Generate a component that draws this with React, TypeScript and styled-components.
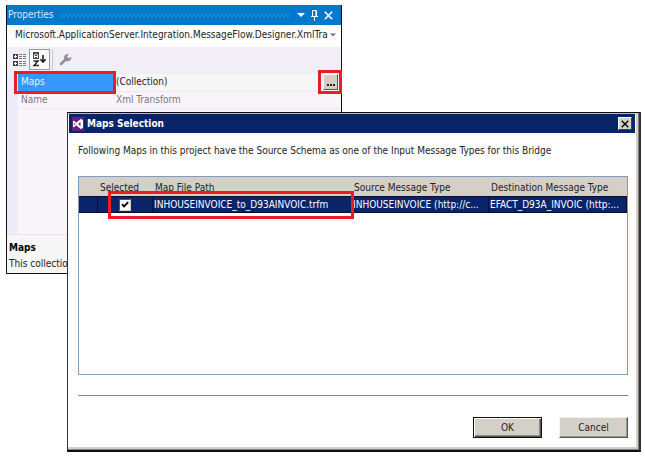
import React from 'react';
import styled, { createGlobalStyle } from 'styled-components';

const FONT = '"DejaVu Sans Condensed", "DejaVu Sans", Tahoma, sans-serif';

const GlobalStyle = createGlobalStyle`
  *, *::before, *::after { box-sizing: border-box; }
  body { margin: 0; background: #fff; }
  body, button, input, table, select { font: 10px/14px ${FONT}; color: #222; }
  svg { display: block; }
`;

const Desktop = styled.main`
  position: relative;
  min-height: 100vh;
  padding: 5px 6px;
`;

/* Properties tool window */

const Panel = styled.section`
  display: flex;
  flex-direction: column;
  width: 100%;
  max-width: 336px;
  border: solid #111;
  border-width: 0 1px 1px;
  background: #f9f5fb;
`;

const PanelTitle = styled.header`
  display: flex;
  align-items: center;
  gap: 7px;
  height: 20px;
  padding: 0 8px 0 1px;
  background: #0079cc;
  color: #d5ebfa;
`;

const PanelHeading = styled.h2`
  margin: 0;
  font-size: 10px;
  line-height: 14px;
  font-weight: 400;
`;

const Grip = styled.div`
  flex: 1;
  height: 5px;
  background-image: radial-gradient(circle, #4fa5e0 1px, transparent 1px),
    radial-gradient(circle, #4fa5e0 1px, transparent 1px);
  background-size: 4px 4px;
  background-position: 0 0, 2px 2px;
  opacity: 0.4;
`;

const TitleTools = styled.div`
  display: flex;
  align-items: center;
  gap: 5px;
`;

const IconButton = styled.button`
  display: grid;
  place-items: center;
  padding: 0;
  border: 0;
  background: none;
  color: inherit;
`;

const ObjectPicker = styled.button`
  display: flex;
  align-items: center;
  justify-content: space-between;
  height: 22px;
  padding: 0 5px 2px 8px;
  border: 0;
  background: #fff;
  text-align: left;
  white-space: nowrap;
`;

const ObjectName = styled.span`
  flex: 1;
  min-width: 0;
  overflow: hidden;
`;

const PanelToolbar = styled.div`
  display: flex;
  align-items: center;
  height: 27px;
  padding: 0 0 2px 3px;
  background: #f1eef6;
`;

const ToolButton = styled.button<{ $active?: boolean }>`
  display: grid;
  place-items: center;
  width: ${(p) => (p.$active ? 21 : 19)}px;
  height: 21px;
  padding: 0;
  border: 1px solid ${(p) => (p.$active ? '#5fa9ee' : 'transparent')};
  background: ${(p) => (p.$active ? '#fcfdff' : 'none')};
`;

const ToolDivider = styled.span`
  width: 1px;
  height: 21px;
  margin: 0 3px 0 2px;
  background: #cbc9d6;
`;

const PropertyArea = styled.div`
  min-height: 160px;
  border-left: 11px solid #ecebf7;
`;

const PropertyTable = styled.table`
  width: 100%;
  border-collapse: collapse;
  table-layout: fixed;
`;

const PropertyName = styled.th<{ $selected?: boolean }>`
  position: relative;
  width: 96px;
  height: 17px;
  padding: 0 3px;
  border-bottom: 1px solid #eeeaf3;
  background: ${(p) => (p.$selected ? '#3399ff' : 'transparent')};
  color: ${(p) => (p.$selected ? '#e6f3ff' : '#77757b')};
  font-weight: 400;
  text-align: left;
`;

const PropertyValue = styled.td<{ $muted?: boolean }>`
  position: relative;
  height: 17px;
  padding: 0 3px 0 2px;
  border-bottom: 1px solid #eeeaf3;
  background: ${(p) => (p.$muted ? 'transparent' : '#f7f7f7')};
  color: ${(p) => (p.$muted ? '#77757b' : '#222')};
`;

const ValueLine = styled.div`
  display: flex;
  align-items: center;
  justify-content: space-between;
`;

const EllipsisButton = styled.button`
  display: flex;
  align-items: flex-end;
  justify-content: center;
  width: 15px;
  height: 16px;
  padding: 0 0 3px;
  border: 1px solid;
  border-color: #fff #555 #555 #fff;
  background: #d4d0c8;
`;

const Description = styled.footer`
  height: 39px;
  padding: 5px 2px 0;
  border-top: 1px solid #e6e4ea;
  background: #f6f6f6;
  overflow: hidden;
`;

const DescriptionTitle = styled.h3`
  margin: 0;
  font-size: 10px;
  line-height: 16px;
  color: #000;
`;

const DescriptionText = styled.p`
  margin: 0;
  line-height: 16px;
`;

/* Red frame laid over a part to call attention to it */
const Callout = styled.span<{ $inset: string }>`
  position: absolute;
  inset: ${(p) => p.$inset};
  z-index: 1;
  border: 3px solid #ed1c24;
  pointer-events: none;
`;

/* Maps Selection dialog */

const Dialog = styled.section`
  position: absolute;
  top: 112px;
  left: 67px;
  right: 4px;
  border: solid;
  border-width: 1px 2px 2px 1px;
  border-color: #111 #333 #111 #333;
  background: #fff;
  box-shadow: inset -1px -1px #808080, inset -3px -3px #d4d0c8, inset 0 1px #b9b9bd;
  padding: 1px 4px 4px 1px;
`;

const DialogTitle = styled.header`
  display: flex;
  align-items: center;
  gap: 3px;
  height: 19px;
  padding: 0 3px;
  background: #0a246a;
  color: #fff;
`;

const DialogHeading = styled.h1`
  flex: 1;
  margin: 0;
  font-size: 10px;
  line-height: 14px;
`;

const CloseButton = styled.button`
  display: grid;
  place-items: center;
  width: 14px;
  height: 13px;
  padding: 0;
  border: 1px solid;
  border-color: #fff #404040 #404040 #fff;
  background: #d4d0c8;
`;

const DialogBody = styled.div`
  padding: 11px 7px 8px 9px;
`;

const Prompt = styled.p`
  margin: 0 0 18px;
`;

const MapList = styled.div`
  height: 199px;
  border: 1px solid #7f9db9;
  background: #fff;
`;

const MapTable = styled.table`
  width: 100%;
  border-collapse: separate;
  border-spacing: 0;
  table-layout: fixed;
`;

const Column = styled.col<{ $width?: number }>`
  width: ${(p) => (p.$width ? `${p.$width}px` : 'auto')};
`;

const ColumnHeader = styled.th`
  height: 19px;
  padding: 3px 2px 0;
  background: #d4d0c8;
  font-weight: 400;
  text-align: left;
  white-space: nowrap;
`;

const MapCell = styled.td<{ $center?: boolean }>`
  position: relative;
  height: 17px;
  padding: 0 1px;
  border: 1px solid #060f30;
  border-left-width: 0;
  background: #0a246a;
  color: #fff;
  text-align: ${(p) => (p.$center ? 'center' : 'left')};
  white-space: nowrap;
`;

const SelectBox = styled.input`
  display: block;
  appearance: none;
  width: 12px;
  height: 12px;
  margin: 0 auto;
  border: 1px solid;
  border-color: #555 #d4d0c8 #d4d0c8 #555;
  background: #fff;

  &:checked {
    background: #fff
      url("data:image/svg+xml,%3Csvg xmlns='http://www.w3.org/2000/svg' viewBox='0 0 10 10'%3E%3Cpath d='M2 4.2 4 6.4 8.2 2.2' fill='none' stroke='%23000' stroke-width='1.8'/%3E%3C/svg%3E")
      center / 10px 10px no-repeat;
  }
`;

const Separator = styled.hr`
  height: 1px;
  margin: 20px 0 21px;
  border: 0;
  background: #858585;
`;

const ButtonRow = styled.div`
  display: flex;
  justify-content: flex-end;
  gap: 17px;
`;

const PushButton = styled.button<{ $default?: boolean }>`
  width: 69px;
  height: 21px;
  padding: 0;
  border: 1px solid;
  border-color: ${(p) => (p.$default ? '#111' : '#f4f3f0 #555 #555 #f4f3f0')};
  background: #d4d0c8;
  box-shadow: ${(p) =>
    p.$default ? 'inset 1px 1px #fff, inset -1px -1px #555, inset -2px -2px #8f8c86' : 'inset -1px -1px #9a9790'};
`;

const CategorizedIcon = () => (
  <svg width="14" height="14" viewBox="0 0 14 14" aria-hidden="true">
    <path d="M0 1h5v5H0zM0 8h5v5H0z" fill="#444" />
    <path d="M1 3.5h3M2.5 2v3M1 10.5h3M2.5 9v3" stroke="#fff" />
    <path d="M6 1.5h3M10 1.5h3M6 3.5h3M10 3.5h3M6 5.5h3M10 5.5h3M6 8.5h3M10 8.5h3M6 10.5h3M10 10.5h3M6 12.5h3M10 12.5h3" stroke="#777" />
  </svg>
);

const SortIcon = () => (
  <svg width="15" height="15" viewBox="0 0 15 15" aria-hidden="true">
    <path d="M1 0h6v7H1z" fill="#444" />
    <path d="M2.5 6V3L4 1.5 5.5 3v3M2.5 4.5h3" fill="none" stroke="#fff" />
    <path d="M1.5 9H6L2 13.5h4.8" fill="none" stroke="#222" strokeWidth="1.4" />
    <path d="M11 3v7M8.3 7.2 11 10l2.7-2.8" fill="none" stroke="#222" strokeWidth="1.6" />
  </svg>
);

const WrenchIcon = () => (
  <svg width="13" height="13" viewBox="0 0 13 13" aria-hidden="true">
    <path d="M2 11 7 6" stroke="#929198" strokeWidth="2.6" strokeLinecap="round" />
    <path d="M9.8 1.2A3.6 3.6 0 1 0 12.2 4L9.6 5.2 8 3.6z" fill="#929198" />
  </svg>
);

const Arrow = ({ size, color }: { size: number; color: string }) => (
  <svg width={size} height="4" viewBox="0 0 8 4" aria-hidden="true">
    <path d="M0 0h8L4 4z" fill={color} />
  </svg>
);

const PinIcon = () => (
  <svg width="9" height="11" viewBox="0 0 9 11" aria-hidden="true">
    <path d="M2.5 6V.5h4V6M1 6.5h7M4.5 7v4" fill="none" stroke="#fff" />
    <path d="M5.5 1v5" stroke="#fff" strokeOpacity="0.6" />
  </svg>
);

const CrossIcon = ({ size, color }: { size: number; color: string }) => (
  <svg width={size} height={size} viewBox="0 0 8 8" aria-hidden="true">
    <path d="M.7.7l6.600 6.600M7.300.7.7 7.300" stroke={color} strokeWidth="1.4" />
  </svg>
);

const DotsIcon = () => (
  <svg width="8" height="2" viewBox="0 0 8 2" aria-hidden="true">
    <path d="M0 0h2v2H0zM3 0h2v2H3zM6 0h2v2H6z" fill="#222" />
  </svg>
);

const StudioIcon = () => (
  <svg width="12" height="14" viewBox="0 0 12 14" aria-hidden="true">
    <path d="M0 0h12v14H0z" fill="#68217a" />
    <path
      d="M8.500 2 11 3v8l-2.500 1L4.300 8.300 2 10.200 1 9.700V4.300l1-.5 2.300 1.900zM8.500 5 6 7l2.500 2zM2.300 5.600v2.800L3.600 7z"
      fill="#fff"
      fillRule="evenodd"
    />
  </svg>
);

export default function App() {
  return (
    <>
      <GlobalStyle />
      <Desktop>
        <Panel aria-label="Properties">
          <PanelTitle>
            <PanelHeading>Properties</PanelHeading>
            <Grip />
            <TitleTools>
              <IconButton aria-label="Window position"><Arrow size={8} color="#fff" /></IconButton>
              <IconButton aria-label="Auto hide"><PinIcon /></IconButton>
              <IconButton aria-label="Close properties"><CrossIcon size={9} color="#fff" /></IconButton>
            </TitleTools>
          </PanelTitle>
          <ObjectPicker>
            <ObjectName>Microsoft.ApplicationServer.Integration.MessageFlow.Designer.XmlTra</ObjectName>
            <Arrow size={6} color="#777" />
          </ObjectPicker>
          <PanelToolbar>
            <ToolButton aria-label="Categorized"><CategorizedIcon /></ToolButton>
            <ToolButton $active aria-label="Alphabetical"><SortIcon /></ToolButton>
            <ToolDivider />
            <ToolButton aria-label="Property pages"><WrenchIcon /></ToolButton>
          </PanelToolbar>
          <PropertyArea>
            <PropertyTable>
              <tbody>
                <tr>
                  <PropertyName scope="row" $selected>
                    Maps
                    <Callout $inset="-3px -2px -3px -4px" />
                  </PropertyName>
                  <PropertyValue>
                    <ValueLine>
                      (Collection)
                      <EllipsisButton aria-label="Edit Maps"><DotsIcon /></EllipsisButton>
                    </ValueLine>
                    <Callout $inset="-4px -1px -3px calc(100% - 23px)" />
                  </PropertyValue>
                </tr>
                <tr>
                  <PropertyName scope="row">Name</PropertyName>
                  <PropertyValue $muted>Xml Transform</PropertyValue>
                </tr>
              </tbody>
            </PropertyTable>
          </PropertyArea>
          <Description>
            <DescriptionTitle>Maps</DescriptionTitle>
            <DescriptionText>This collection</DescriptionText>
          </Description>
        </Panel>

        <Dialog role="dialog" aria-labelledby="dialog-title">
          <DialogTitle>
            <StudioIcon />
            <DialogHeading id="dialog-title">Maps Selection</DialogHeading>
            <CloseButton aria-label="Close"><CrossIcon size={8} color="#000" /></CloseButton>
          </DialogTitle>
          <DialogBody>
            <Prompt>
              Following Maps in this project have the Source Schema as one of the Input Message Types for this Bridge
            </Prompt>
            <MapList>
              <MapTable>
                <colgroup>
                  <Column $width={19} />
                  <Column $width={55} />
                  <Column $width={199} />
                  <Column $width={137} />
                  <Column />
                </colgroup>
                <thead>
                  <tr>
                    <ColumnHeader />
                    <ColumnHeader scope="col">Selected</ColumnHeader>
                    <ColumnHeader scope="col">Map File Path</ColumnHeader>
                    <ColumnHeader scope="col">Source Message Type</ColumnHeader>
                    <ColumnHeader scope="col">Destination Message Type</ColumnHeader>
                  </tr>
                </thead>
                <tbody>
                  <tr>
                    <MapCell />
                    <MapCell $center>
                      <SelectBox type="checkbox" defaultChecked aria-label="Select INHOUSEINVOICE_to_D93AINVOIC.trfm" />
                      <Callout $inset="-6px -202px -7px 10px" />
                    </MapCell>
                    <MapCell>INHOUSEINVOICE_to_D93AINVOIC.trfm</MapCell>
                    <MapCell>INHOUSEINVOICE (http://c...</MapCell>
                    <MapCell>EFACT_D93A_INVOIC (http:...</MapCell>
                  </tr>
                </tbody>
              </MapTable>
            </MapList>
            <Separator />
            <ButtonRow>
              <PushButton $default>OK</PushButton>
              <PushButton>Cancel</PushButton>
            </ButtonRow>
          </DialogBody>
        </Dialog>
      </Desktop>
    </>
  );
}
